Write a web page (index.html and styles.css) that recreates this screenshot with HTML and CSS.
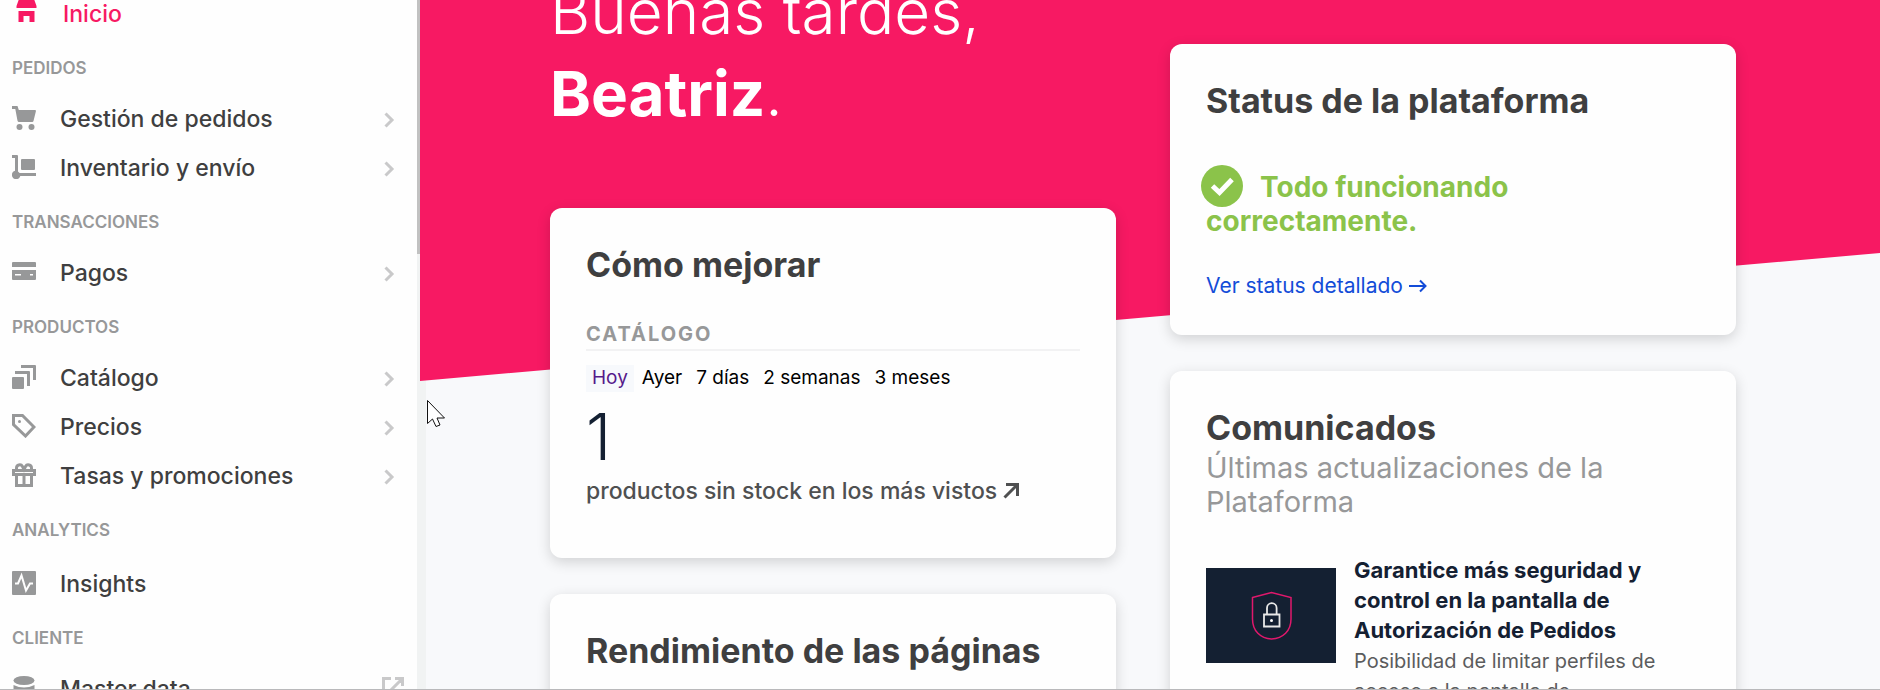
FILE: index.html
```html
<!DOCTYPE html>
<html lang="es">
<head>
<meta charset="utf-8">
<meta name="viewport" content="width=device-width, initial-scale=1">
<title>Inicio</title>
<link rel="stylesheet" href="styles.css">
</head>
<body>
<div class="app">
  <nav class="sidebar" aria-label="Principal">
    <div class="menu">
      <a class="item item-home" href="#">
        <svg class="icon" viewBox="0 0 24 24"><path d="M4 1h15l2.500 7v2h-20V8zM3.500 13h16v11h-5v-6h-6v6h-5z"/></svg>
        <span class="text">Inicio</span>
      </a>

      <h2 class="label">PEDIDOS</h2>
      <a class="item" href="#">
        <svg class="icon" viewBox="0 0 24 24"><path d="M0 0h5.500l1.300 4H23q1.200 0 .9 1.200L21.500 15q-.3 1-1.300 1H7q-1.200 0-1.500-1.200L3.300 3H0z"/><circle cx="7.500" cy="21" r="3"/><circle cx="19.500" cy="21" r="3"/></svg>
        <span class="text">Gestión de pedidos</span>
        <svg class="arrow" viewBox="0 0 22 22"><path d="M3.500 4.500 10 11l-6.500 6.500"/></svg>
      </a>
      <a class="item" href="#">
        <svg class="icon" viewBox="0 0 24 24"><path d="M0 0h5q1 0 1 1v15.500l1.600 1.500H24v3H8.300A4.300 4.300 0 1 1 3 15.700V3H0z"/><rect x="9" y="4" width="14" height="11" rx="1"/></svg>
        <span class="text">Inventario y envío</span>
        <svg class="arrow" viewBox="0 0 22 22"><path d="M3.500 4.500 10 11l-6.500 6.500"/></svg>
      </a>

      <h2 class="label">TRANSACCIONES</h2>
      <a class="item" href="#">
        <svg class="icon" viewBox="0 0 24 24"><path fill-rule="evenodd" d="M1 2h22q1 0 1 1v4H0V3q0-1 1-1zM0 10h24v9q0 1-1 1H1q-1 0-1-1zm3 4v1.500h6V14zm15 0v1.500h3V14z"/></svg>
        <span class="text">Pagos</span>
        <svg class="arrow" viewBox="0 0 22 22"><path d="M3.500 4.500 10 11l-6.500 6.500"/></svg>
      </a>

      <h2 class="label">PRODUCTOS</h2>
      <a class="item" href="#">
        <svg class="icon" viewBox="0 0 24 24"><rect y="12" width="12" height="12" rx="1"/><path d="M3 6h14q1 0 1 1v14h-3V9H3zM9 0h14q1 0 1 1v14h-3V3H9z"/></svg>
        <span class="text">Catálogo</span>
        <svg class="arrow" viewBox="0 0 22 22"><path d="M3.500 4.500 10 11l-6.500 6.500"/></svg>
      </a>
      <a class="item" href="#">
        <svg class="icon" viewBox="0 0 24 24"><path class="stroke" d="M1.500 1.500h9L22 13l-8.500 9L1.500 10.500z"/><circle cx="7.500" cy="7.500" r="1.500"/></svg>
        <span class="text">Precios</span>
        <svg class="arrow" viewBox="0 0 22 22"><path d="M3.500 4.500 10 11l-6.500 6.500"/></svg>
      </a>
      <a class="item" href="#">
        <svg class="icon" viewBox="0 0 24 24"><path class="stroke" d="M1.500 7.500h21v4h-21zM4.500 12v10.500h15V12M12 12v10M4.500 7V5a3.200 3.200 0 0 1 6-1.500L12 6.500l1.500-3a3.200 3.200 0 0 1 6 1.500v2"/></svg>
        <span class="text">Tasas y promociones</span>
        <svg class="arrow" viewBox="0 0 22 22"><path d="M3.500 4.500 10 11l-6.500 6.500"/></svg>
      </a>

      <h2 class="label">ANALYTICS</h2>
      <a class="item item-spaced" href="#">
        <svg class="icon" viewBox="0 0 24 24"><rect width="24" height="24" rx="1"/><path class="pulse" d="M3 12.500h3l3.500-8L14 19.500l4-7h3"/></svg>
        <span class="text">Insights</span>
      </a>

      <h2 class="label">CLIENTE</h2>
      <a class="item" href="#">
        <svg class="icon" viewBox="0 0 24 24"><ellipse cx="12" cy="4.500" rx="10.500" ry="4.500"/><path d="M1.500 9q10.500 5 21 0v5q-10.500 5-21 0z"/></svg>
        <span class="text">Master data</span>
        <svg class="arrow arrow-external" viewBox="0 0 22 22"><path d="M9 1.500H1.500v19h19V13M13 1.500h7.500V9M20 2 8 14"/></svg>
      </a>
    </div>
    <div class="track"><div class="thumb"></div></div>
  </nav>

  <main class="main">
    <svg class="banner" viewBox="0 0 1460 381" preserveAspectRatio="none" aria-hidden="true"><path d="M0 0h1460v253L0 381z"/></svg>
    <div class="columns">
      <div class="column">
        <h1 class="greeting">Buenas tardes,<br><strong>Beatriz</strong>.</h1>
        <section class="card">
          <h2 class="card-title">Cómo mejorar</h2>
          <h3 class="section-title">CATÁLOGO</h3>
          <div class="tabs">
            <button class="tab tab-active" type="button">Hoy</button>
            <button class="tab" type="button">Ayer</button>
            <button class="tab" type="button">7 días</button>
            <button class="tab" type="button">2 semanas</button>
            <button class="tab" type="button">3 meses</button>
          </div>
          <div class="figure">1</div>
          <a class="metric" href="#">productos sin stock en los más vistos
            <svg class="metric-arrow" viewBox="0 0 16 16"><path d="M1.500 14.500 13 3M3 1.500h11.500V13"/></svg>
          </a>
        </section>
        <section class="card">
          <h2 class="card-title">Rendimiento de las páginas</h2>
        </section>
      </div>

      <div class="column column-side">
        <section class="card">
          <h2 class="card-title">Status de la plataforma</h2>
          <p class="status"><svg class="check" viewBox="0 0 42 42"><circle cx="21" cy="21" r="21"/><path d="m11.500 21 7 6.500L31 14.500"/></svg>Todo funcionando correctamente.</p>
          <a class="link" href="#">Ver status detallado
            <svg class="link-arrow" viewBox="0 0 18 14"><path d="M0 7h16M11 1.500 16.500 7 11 12.500"/></svg>
          </a>
        </section>
        <section class="card">
          <h2 class="card-title">Comunicados</h2>
          <p class="subtitle">Últimas actualizaciones de la Plataforma</p>
          <article class="news">
            <svg class="news-image" viewBox="0 0 130 95">
              <rect width="130" height="95" fill="#142032"/>
              <path d="M46.500 29.500 65.500 24.500l19.500 5V51c0 12-8 19.500-19.500 20-11-.5-19-8-19-20z" fill="none" stroke="#e0186c" stroke-width="1.500"/>
              <path d="M58 46.500h15.500v12H58zM61 46v-6a4.800 4.800 0 0 1 9.600 0v6" fill="none" stroke="#e8e8e8" stroke-width="1.800"/>
              <circle cx="65.500" cy="52.500" r="1.500" fill="#fff"/>
            </svg>
            <div class="news-body">
              <h3 class="news-title">Garantice más seguridad y control en la pantalla de Autorización de Pedidos</h3>
              <p class="news-text">Posibilidad de limitar perfiles de acceso a la pantalla de</p>
            </div>
          </article>
        </section>
      </div>
    </div>
  </main>
</div>
<svg class="cursor" viewBox="0 0 18 28" aria-hidden="true"><path d="M.5.500v23l5-4.500 3.500 7.500 4-1.500-3-7h7.500z"/></svg>
</body>
</html>
```
FILE: styles.css
```css
* {
  box-sizing: border-box;
}

body {
  margin: 0;
  font-family: Inter, "Open Sans", sans-serif;
  color: #3f3f40;
  background: #f8f9fb;
}

h1, h2, h3, p {
  margin: 0;
}

a {
  color: inherit;
  text-decoration: none;
}

.app {
  display: flex;
  height: 100vh;
  overflow: hidden;
  border-bottom: 1px solid #b9b9bb;
}

/* Sidebar */

.sidebar {
  display: flex;
  flex: none;
  width: 426px;
  background: #fefefe;
}

.menu {
  flex: 1;
  margin-top: -11px;
  padding: 0 13px 0 12px;
}

.track {
  width: 9px;
  background: #f1f3f3;
}

.thumb {
  height: 254px;
  background: #c1c1c1;
}

.item {
  display: flex;
  align-items: center;
  gap: 24px;
  height: 49px;
  font-size: 23px;
  font-weight: 500;
  line-height: 40px;
}

.item-home {
  padding-left: 3px;
  color: #f71963;
}

.item-spaced {
  margin-top: 3px;
}

.label {
  height: 56px;
  padding-top: 4px;
  font-size: 17px;
  font-weight: 600;
  line-height: 52px;
  color: #979899;
}

.text {
  flex: 1;
}

.icon {
  align-self: flex-start;
  width: 24px;
  height: 24px;
  margin-top: 12px;
  fill: #979899;
}

.item-home .icon {
  margin-top: 9px;
  fill: #f71963;
}

.icon .stroke {
  fill: none;
  stroke: #979899;
  stroke-width: 3;
}

.icon .pulse {
  fill: none;
  stroke: #fefefe;
  stroke-width: 2;
}

.arrow {
  width: 22px;
  height: 22px;
  margin-top: 3px;
  fill: none;
  stroke: #c9c9ca;
  stroke-width: 3;
}

.arrow-external {
  align-self: flex-start;
  margin-top: 13px;
}

/* Content */

.main {
  position: relative;
  flex: 1;
  min-width: 0;
  padding: 0 144px 0 124px;
}

.banner {
  position: absolute;
  top: 0;
  right: 0;
  width: calc(100% + 6px);
  height: 381px;
  fill: #f71963;
}

.columns {
  position: relative;
  display: grid;
  grid-template-columns: 1fr 1fr;
  gap: 54px;
}

.column {
  display: flex;
  flex-direction: column;
  gap: 36px;
  margin-top: -29px;
}

.column-side {
  margin-top: 44px;
}

.greeting {
  padding-bottom: 37px;
  font-size: 62px;
  font-weight: 300;
  line-height: 82px;
  color: #fff;
}

.greeting strong {
  font-weight: 700;
}

.card {
  padding: 36px;
  background: #fefefe;
  border-radius: 12px;
  box-shadow: 0 4px 14px rgba(0, 0, 0, 0.16);
}

.card-title {
  font-size: 34px;
  font-weight: 700;
  line-height: 42px;
}

.section-title {
  margin-top: 34px;
  padding-bottom: 1px;
  border-bottom: 2px solid #f2f2f3;
  font-size: 20px;
  font-weight: 700;
  line-height: 28px;
  letter-spacing: 2px;
  color: #979899;
}

.tabs {
  display: flex;
  gap: 2px;
  margin-top: 14px;
}

.tab {
  padding: 0 6px 1px;
  border: 0;
  background: none;
  font: 400 19px/26px Inter, "Open Sans", sans-serif;
  color: #000;
}

.tab-active {
  background: #f7f9fc;
  color: #551a8b;
}

.figure {
  margin-top: 14px;
  font-size: 64px;
  font-weight: 300;
  line-height: 62px;
  color: #142032;
}

.metric {
  display: block;
  margin: 7px 0 15px;
  font-size: 23px;
  font-weight: 500;
  line-height: 32px;
  color: #4f5051;
}

.metric-arrow {
  width: 16px;
  height: 16px;
  fill: none;
  stroke: #4f5051;
  stroke-width: 3;
}

.status {
  margin-top: 48px;
  font-size: 28px;
  font-weight: 700;
  line-height: 34px;
  color: #8bc34a;
}

.check {
  width: 42px;
  height: 42px;
  margin: -8px 17px -8px -5px;
  vertical-align: -2px;
  fill: #8bc34a;
}

.check path {
  fill: none;
  stroke: #fff;
  stroke-width: 5;
}

.link {
  display: block;
  margin: 34px 0 -1px;
  font-size: 21px;
  line-height: 28px;
  color: #134cd8;
}

.link-arrow {
  width: 18px;
  height: 14px;
  fill: none;
  stroke: #134cd8;
  stroke-width: 2;
}

.subtitle {
  margin-top: 2px;
  font-size: 29px;
  line-height: 34px;
  color: #979899;
}

.news {
  display: flex;
  align-items: flex-start;
  gap: 18px;
  margin-top: 36px;
}

.news-image {
  flex: none;
  width: 130px;
  height: 95px;
  margin-top: 13px;
}

.news-title {
  font-size: 22px;
  font-weight: 700;
  line-height: 30px;
  color: #142032;
}

.news-text {
  margin-top: 1px;
  font-size: 20px;
  line-height: 30px;
  color: #5b5c5d;
}

.cursor {
  position: absolute;
  top: 400px;
  left: 427px;
  width: 18px;
  height: 28px;
  fill: #fff;
  stroke: #111;
}
```
